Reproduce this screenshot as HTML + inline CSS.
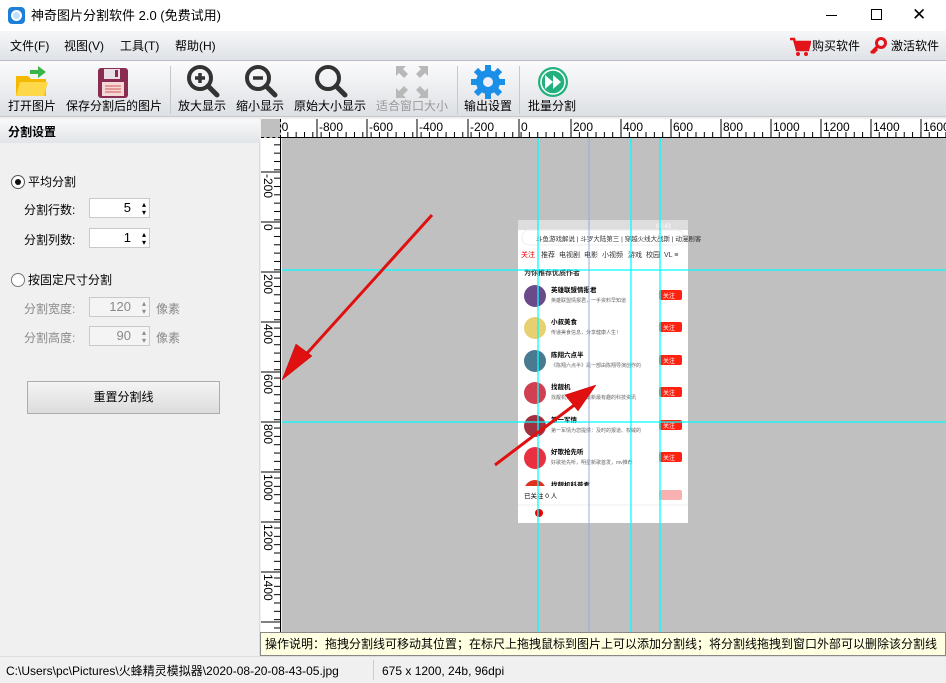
<!DOCTYPE html>
<html><head><meta charset="utf-8">
<style>
*{margin:0;padding:0;box-sizing:border-box}
body{width:946px;height:683px;overflow:hidden;font-family:"Liberation Sans","Noto Sans CJK SC",sans-serif;font-size:12px;line-height:14px;color:#000;background:#f0f0f0;position:relative}
.abs{position:absolute}
#title{left:0;top:0;width:946px;height:31px;background:#fff}
#menu{left:0;top:31px;width:946px;height:30px;background:linear-gradient(#f6f7f9,#dfe2e6);border-bottom:1px solid #b8bcc2}
#tool{left:0;top:61px;width:946px;height:56px;background:linear-gradient(#fbfbfc,#dde0e4);border-bottom:1px solid #c8c8c8}
.tb{position:absolute;top:99px;font-size:12px;line-height:14px;white-space:nowrap;transform:translateX(-50%)}
.sep{position:absolute;top:66px;width:1px;height:48px;background:#c8c8c8}
#left{left:0;top:118px;width:260px;height:538px;background:#f0f0f0;border-right:1px solid #ddd}
.spin{position:absolute;width:61px;height:20px;background:#fff;border:1px solid #c9c9c9;text-align:right;padding-right:18px;line-height:18px;font-size:13px}
.spin:after{content:"▴\A▾";white-space:pre;position:absolute;right:3px;top:0;font-size:8px;line-height:8px;padding-top:2px}
.dis{color:#8a8a8a}
</style></head><body>
<div id="title" class="abs">
 <div class="abs" style="left:8px;top:7px;width:17px;height:17px;border-radius:4px;background:#1e7fd9"><div style="margin:3px;width:11px;height:11px;border-radius:50%;background:#bfe1ff;border:2px solid #fff"></div></div>
 <div class="abs" style="left:31px;top:9px;font-size:13px">神奇图片分割软件 2.0 (免费试用)</div>
 <div class="abs" style="left:826px;top:15px;width:11px;height:1px;background:#000"></div>
 <div class="abs" style="left:871px;top:9px;width:11px;height:11px;border:1px solid #000"></div>
 <div class="abs" style="left:912px;top:5px;font-size:17px;line-height:20px">✕</div>
</div>
<div id="menu" class="abs">
 <div class="abs" style="left:10px;top:8px">文件(F)</div>
 <div class="abs" style="left:64px;top:8px">视图(V)</div>
 <div class="abs" style="left:120px;top:8px">工具(T)</div>
 <div class="abs" style="left:175px;top:8px">帮助(H)</div>
 <svg class="abs" style="left:789px;top:5px" width="22" height="22"><path d="M1 3h4l3 11h11l2-8H7" fill="none" stroke="#e2141a" stroke-width="2.5"/><rect x="7" y="6" width="13" height="8" fill="#e2141a"/><circle cx="9" cy="18" r="2" fill="#e2141a"/><circle cx="17" cy="18" r="2" fill="#e2141a"/></svg>
 <div class="abs" style="left:812px;top:8px">购买软件</div>
 <svg class="abs" style="left:869px;top:6px" width="18" height="18"><circle cx="12" cy="6" r="4.5" fill="none" stroke="#e2141a" stroke-width="3"/><path d="M9 9L2 16M4 14l2 2M6 12l2 2" stroke="#e2141a" stroke-width="3"/></svg>
 <div class="abs" style="left:891px;top:8px">激活软件</div>
</div>
<div id="tool" class="abs"></div>
<svg class="abs" style="left:14px;top:66px" width="36" height="32"><path d="M2 10h12l3 3h15v17H2z" fill="#f5b800"/><path d="M6 16h28l-4 14H2z" fill="#ffd84a"/><path d="M16 4h8V0l8 6-8 6V8h-8z" fill="#3ab54a"/></svg>
<svg class="abs" style="left:97px;top:67px" width="32" height="32"><rect x="1" y="1" width="30" height="30" rx="3" fill="#8a2b52"/><rect x="7" y="2" width="16" height="10" fill="#e8e0e4"/><rect x="18" y="3" width="3" height="7" fill="#8a2b52"/><rect x="5" y="15" width="22" height="14" fill="#f4d8d8"/><path d="M8 19h16M8 22h16M8 25h16" stroke="#e08080" stroke-width="1.5"/></svg>
<svg class="abs" style="left:186px;top:64px" width="34" height="34"><circle cx="14" cy="14" r="11" fill="none" stroke="#333" stroke-width="4"/><path d="M22 22l9 9" stroke="#333" stroke-width="5" stroke-linecap="round"/><path d="M9 14h10M14 9v10" stroke="#333" stroke-width="3.5"/></svg>
<svg class="abs" style="left:244px;top:64px" width="34" height="34"><circle cx="14" cy="14" r="11" fill="none" stroke="#333" stroke-width="4"/><path d="M22 22l9 9" stroke="#333" stroke-width="5" stroke-linecap="round"/><path d="M9 14h10" stroke="#333" stroke-width="3.5"/></svg>
<svg class="abs" style="left:314px;top:64px" width="34" height="34"><circle cx="14" cy="14" r="11" fill="none" stroke="#333" stroke-width="4"/><path d="M22 22l9 9" stroke="#333" stroke-width="5" stroke-linecap="round"/></svg>
<svg class="abs" style="left:395px;top:65px" width="34" height="34" fill="#b8b8b8"><path d="M1 1h10l-3 3 5 5-4 4-5-5-3 3zM33 1H23l3 3-5 5 4 4 5-5 3 3zM1 33h10l-3-3 5-5-4-4-5 5-3-3zM33 33H23l3-3-5-5 4-4 5 5 3-3z"/></svg>
<svg class="abs" style="left:471px;top:65px" width="34" height="34"><g fill="#1a8fe8"><circle cx="17" cy="17" r="12"/><g id="t"><rect x="14" y="0" width="6" height="8"/><rect x="14" y="26" width="6" height="8"/></g><use href="#t" transform="rotate(45 17 17)"/><use href="#t" transform="rotate(90 17 17)"/><use href="#t" transform="rotate(135 17 17)"/></g><circle cx="17" cy="17" r="5" fill="#eef"/></svg>
<svg class="abs" style="left:537px;top:66px" width="32" height="32"><circle cx="16" cy="16" r="15" fill="#22b07d"/><circle cx="16" cy="16" r="12" fill="none" stroke="#fff" stroke-width="1.5"/><path d="M8 9l8 7-8 7zM16 9l8 7-8 7z" fill="#fff"/></svg>
<div class="tb" style="left:32px">打开图片</div>
<div class="tb" style="left:114px">保存分割后的图片</div>
<div class="sep" style="left:170px"></div>
<div class="tb" style="left:202px">放大显示</div>
<div class="tb" style="left:260px">缩小显示</div>
<div class="tb" style="left:330px">原始大小显示</div>
<div class="tb" style="left:412px;color:#999">适合窗口大小</div>
<div class="sep" style="left:457px"></div>
<div class="tb" style="left:488px">输出设置</div>
<div class="sep" style="left:519px"></div>
<div class="tb" style="left:552px">批量分割</div>

<div id="left" class="abs">
 <div class="abs" style="left:0;top:1px;width:260px;height:24px;background:linear-gradient(#f8f9fa,#e2e5e8);font-weight:bold;font-size:12px;padding:6px 8px">分割设置</div>
 <div class="abs" style="left:11px;top:57px;width:14px;height:14px;border-radius:50%;border:1px solid #555;background:#fff"><div style="margin:3px;width:6px;height:6px;border-radius:50%;background:#111"></div></div>
 <div class="abs" style="left:28px;top:57px">平均分割</div>
 <div class="abs" style="left:24px;top:85px">分割行数:</div>
 <div class="spin" style="left:89px;top:80px">5</div>
 <div class="abs" style="left:24px;top:115px">分割列数:</div>
 <div class="spin" style="left:89px;top:110px">1</div>
 <div class="abs" style="left:11px;top:155px;width:14px;height:14px;border-radius:50%;border:1px solid #777;background:#fff"></div>
 <div class="abs" style="left:28px;top:155px">按固定尺寸分割</div>
 <div class="abs dis" style="left:24px;top:184px">分割宽度:</div>
 <div class="spin dis" style="left:89px;top:179px;background:#f4f4f4">120</div>
 <div class="abs dis" style="left:156px;top:184px">像素</div>
 <div class="abs dis" style="left:24px;top:213px">分割高度:</div>
 <div class="spin dis" style="left:89px;top:208px;background:#f4f4f4">90</div>
 <div class="abs dis" style="left:156px;top:213px">像素</div>
 <div class="abs" style="left:27px;top:263px;width:193px;height:33px;border:1px solid #adadad;background:linear-gradient(#f4f4f4,#dcdcdc);text-align:center;line-height:31px">重置分割线</div>
</div>

<div class="abs" style="left:261px;top:119px;width:20px;height:19px;background:#c0c0c0;border-right:1px dashed #000;border-bottom:1px dashed #000"></div>
<div class="abs" style="left:281px;top:119px;width:665px;height:19px;background:#fff;border-bottom:1px solid #000;overflow:hidden">
 <svg width="665" height="19" style="position:absolute;left:0;top:0;font-family:'Liberation Sans';font-size:12px">
  <defs><pattern id="ht" width="8.33" height="19" patternUnits="userSpaceOnUse" x="-2"><path d="M0.5 13v6" stroke="#000"/></pattern></defs>
  <rect width="665" height="19" fill="url(#ht)"/>
  <g stroke="#000"><path d="M36 0v19M86 0v19M136 0v19M187 0v19M238 0v19M290 0v19M340 0v19M390 0v19M440 0v19M490 0v19M540 0v19M590 0v19M640 0v19"/></g>
  <g fill="#000"><text x="-6" y="12">00</text><text x="38" y="12">-800</text><text x="88" y="12">-600</text><text x="138" y="12">-400</text><text x="189" y="12">-200</text><text x="240" y="12">0</text><text x="292" y="12">200</text><text x="342" y="12">400</text><text x="392" y="12">600</text><text x="442" y="12">800</text><text x="492" y="12">1000</text><text x="542" y="12">1200</text><text x="592" y="12">1400</text><text x="642" y="12">1600</text></g>
 </svg>
</div>
<div class="abs" style="left:261px;top:138px;width:20px;height:494px;background:#fff;border-right:1px solid #000;overflow:hidden">
 <svg width="20" height="494" style="position:absolute;left:0;top:0;font-family:'Liberation Sans';font-size:12px">
  <defs><pattern id="vt" width="20" height="8.33" patternUnits="userSpaceOnUse" y="-2"><path d="M13 0.5h7" stroke="#000"/></pattern></defs>
  <rect width="20" height="494" fill="url(#vt)"/>
  <g stroke="#000"><path d="M0 34h20M0 84h20M0 134h20M0 184h20M0 234h20M0 284h20M0 334h20M0 384h20M0 434h20M0 484h20"/></g>
  <g fill="#000"><text transform="translate(3,36) rotate(90)">-200</text><text transform="translate(3,86) rotate(90)">0</text><text transform="translate(3,136) rotate(90)">200</text><text transform="translate(3,186) rotate(90)">400</text><text transform="translate(3,236) rotate(90)">600</text><text transform="translate(3,286) rotate(90)">800</text><text transform="translate(3,336) rotate(90)">1000</text><text transform="translate(3,386) rotate(90)">1200</text><text transform="translate(3,436) rotate(90)">1400</text></g>
 </svg>
</div>
<div class="abs" style="left:282px;top:138px;width:664px;height:494px;background:#c0c0c0;overflow:hidden">
 <svg width="664" height="494" style="position:absolute;left:0;top:0;font-family:'Liberation Sans','Noto Sans CJK SC';">
  <g transform="translate(236,82)">
   <rect width="170" height="303" fill="#fff"/>
   <rect width="170" height="10" fill="#ddd"/>
   <text x="138" y="8" font-size="6" fill="#fff">08:43</text>
   <rect x="4" y="10" width="162" height="15" rx="7" fill="#fff" stroke="#eee"/>
   <text x="18" y="21" font-size="6.5" fill="#333">斗鱼游戏解说 | 斗罗大陆第三 | 穿越火线大战斯 | 动漫剧客</text>
   <g font-size="7" fill="#333"><text x="3" y="37" fill="#e00">关注</text><text x="23" y="37">推荐</text><text x="41" y="37">电视剧</text><text x="66" y="37">电影</text><text x="84" y="37">小视频</text><text x="110" y="37">游戏</text><text x="128" y="37">校园</text><text x="146" y="37">VL ≡</text>
   <text x="6" y="55" font-weight="bold">为你推荐优质作者</text></g>
   <g font-size="6.5">
    <g><circle cx="17" cy="76" r="11" fill="#6a4a8a"/><text x="33" y="72" font-weight="bold">英雄联盟情报君</text><text x="33" y="82" fill="#666" font-size="5">英雄联盟情报君，一手资料早知道</text><rect x="141" y="70" width="23" height="10" rx="2" fill="#f21"/><text x="145" y="78" fill="#fff" font-size="6">关注</text></g>
    <g transform="translate(0,32)"><circle cx="17" cy="76" r="11" fill="#e8d070"/><text x="33" y="72" font-weight="bold">小叔美食</text><text x="33" y="82" fill="#666" font-size="5">传递美食信息，分享健康人生！</text><rect x="141" y="70" width="23" height="10" rx="2" fill="#f21"/><text x="145" y="78" fill="#fff" font-size="6">关注</text></g>
    <g transform="translate(0,65)"><circle cx="17" cy="76" r="11" fill="#4a7a90"/><text x="33" y="72" font-weight="bold">陈翔六点半</text><text x="33" y="82" fill="#666" font-size="5">《陈翔六点半》是一部由陈翔导演创作的</text><rect x="141" y="70" width="23" height="10" rx="2" fill="#f21"/><text x="145" y="78" fill="#fff" font-size="6">关注</text></g>
    <g transform="translate(0,97)"><circle cx="17" cy="76" r="11" fill="#d04050"/><text x="33" y="72" font-weight="bold">找靓机</text><text x="33" y="82" fill="#666" font-size="5">找靓机为你提供最新最有趣的科技资讯</text><rect x="141" y="70" width="23" height="10" rx="2" fill="#f21"/><text x="145" y="78" fill="#fff" font-size="6">关注</text></g>
    <g transform="translate(0,130)"><circle cx="17" cy="76" r="11" fill="#a03040"/><text x="33" y="72" font-weight="bold">第一军情</text><text x="33" y="82" fill="#666" font-size="5">第一军情为您提供：及时的报道、权威的</text><rect x="141" y="70" width="23" height="10" rx="2" fill="#f21"/><text x="145" y="78" fill="#fff" font-size="6">关注</text></g>
    <g transform="translate(0,162)"><circle cx="17" cy="76" r="11" fill="#e83040"/><text x="33" y="72" font-weight="bold">好歌抢先听</text><text x="33" y="82" fill="#666" font-size="5">好歌抢先听，明星新歌首发，mv推荐</text><rect x="141" y="70" width="23" height="10" rx="2" fill="#f21"/><text x="145" y="78" fill="#fff" font-size="6">关注</text></g>
    <g transform="translate(0,195)"><circle cx="17" cy="76" r="11" fill="#e03020"/><text x="33" y="72" font-weight="bold">找靓机科普君</text></g>
   </g>
   <rect y="266" width="170" height="37" fill="#fff"/>
   <text x="6" y="278" font-size="6.5">已关注 0 人</text><rect x="141" y="270" width="23" height="10" rx="2" fill="#f9b0b0"/>
   <line x1="0" y1="285" x2="170" y2="285" stroke="#eee"/>
   <circle cx="21" cy="293" r="4" fill="#e00"/>
  </g>
  <g stroke="#00ffff" stroke-width="1.3"><path d="M256 0v494M349 0v494M378 0v494M0 132h664M0 284h664"/></g>
  <path d="M307 0v494" stroke="#9ad" stroke-width="1"/>
  <g fill="#e01010" stroke="#c00" stroke-width="0.5">
   <path d="M150 77L18 223" stroke="#e01010" stroke-width="3"/>
   <path d="M0 242L30 218L14 206Z"/>
   <path d="M213 327L295 265" stroke="#e01010" stroke-width="3"/>
   <path d="M314 247L283 257L296 273Z"/>
  </g>
 </svg>
</div>
<div class="abs" style="left:260px;top:632px;width:686px;height:24px;background:#ffffe1;border:1px solid #888;font-size:12px;padding:4px 4px;white-space:nowrap;overflow:hidden">操作说明：拖拽分割线可移动其位置；在标尺上拖拽鼠标到图片上可以添加分割线；将分割线拖拽到窗口外部可以删除该分割线</div>
<div class="abs" style="left:0;top:656px;width:946px;height:27px;background:#f0f0f0;border-top:1px solid #ddd">
 <div class="abs" style="left:6px;top:7px">C:\Users\pc\Pictures\火蜂精灵模拟器\2020-08-20-08-43-05.jpg</div>
 <div class="abs" style="left:373px;top:3px;width:1px;height:20px;background:#ccc"></div>
 <div class="abs" style="left:382px;top:7px">675 x 1200, 24b, 96dpi</div>
</div>
</body></html>
